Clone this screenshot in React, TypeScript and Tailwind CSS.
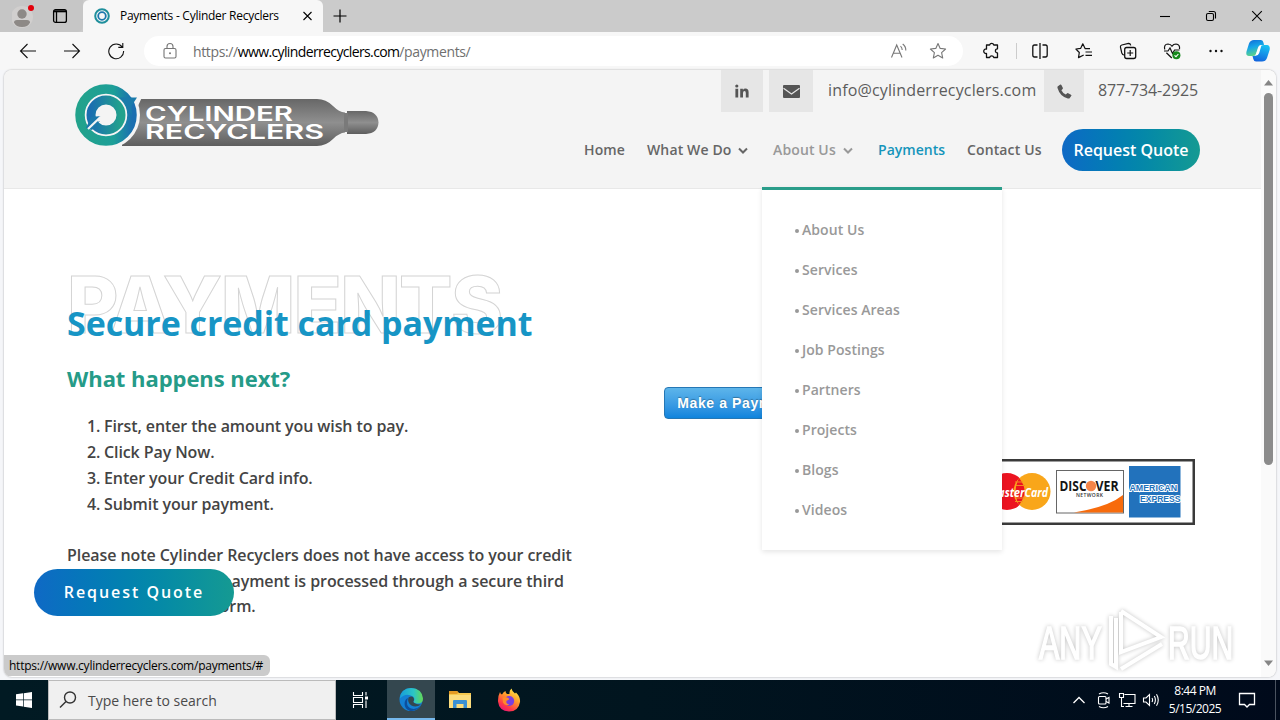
import { ReactNode } from "react";

interface IconProps {
  children: ReactNode;
  size?: number;
  className?: string;
}

function Icon({ children, size = 18, className = "" }: IconProps) {
  return (
    <svg
      width={size}
      height={size}
      viewBox={`0 0 ${size} ${size}`}
      fill="none"
      stroke="currentColor"
      strokeWidth="1.1"
      className={`shrink-0 ${className}`}
    >
      {children}
    </svg>
  );
}

const STAR = "M9 1.5 L11.2 6.4 L16.6 7 L12.6 10.6 L13.7 16 L9 13.3 L4.3 16 L5.4 10.6 L1.4 7 L6.8 6.4 Z";

function Favicon() {
  return (
    <Icon size={16}>
      <circle cx="8" cy="8" r="6.8" stroke="#1f8f9c" strokeWidth="2" />
      <circle cx="8" cy="8" r="3.8" stroke="#1c78ad" strokeWidth="1.8" />
    </Icon>
  );
}

function TitleBar() {
  return (
    <div className="flex h-8 shrink-0 bg-[#cbcbcb]">
      <div className="flex w-[83px] items-center rounded-br-md bg-[#c6c6c6] pl-[12px]">
        <Icon size={24}>
          <circle cx="10" cy="13" r="11" fill="#d1cfce" stroke="none" />
          <circle cx="10" cy="10" r="4.7" fill="#8d8986" stroke="none" />
          <path d="M2 18.5 Q2 16 5 16 H15 Q18 16 18 18.5 Q16 23 10 23 Q4 23 2 18.5Z" fill="#8d8986" stroke="none" />
          <circle cx="19" cy="4" r="3" fill="#e3000b" stroke="none" />
        </Icon>
        <Icon size={16} className="ml-[16px] text-black">
          <rect x="1.6" y="1.6" width="12.8" height="12.8" rx="2" strokeWidth="1.3" />
          <path d="M2 3.3 H14" strokeWidth="2" />
          <path d="M4.5 3 V14" strokeWidth="1.3" />
        </Icon>
      </div>
      <div className="flex w-[240px] items-center rounded-t-md bg-[#f7f7f7] pl-[11px]">
        <Favicon />
        <span className="ml-[10px] w-[180px] whitespace-nowrap text-[12px] tracking-[-0.26px] text-black">
          Payments - Cylinder Recyclers
        </span>
        <Icon size={16} className="text-black">
          <path d="M3.5 4 L11.5 12 M11.5 4 L3.5 12" />
        </Icon>
      </div>
      <div className="flex flex-1 items-center rounded-bl-md pl-[9px]">
        <Icon size={16} className="text-black">
          <path d="M8 1.5 V14.5 M1.5 8 H14.5" strokeWidth="1.2" />
        </Icon>
      </div>
      <div className="flex w-[138px] items-center text-black">
        <div className="flex w-[46px] justify-center">
          <Icon size={12}>
            <path d="M1 6.5 H11" />
          </Icon>
        </div>
        <div className="flex w-[46px] justify-center">
          <Icon size={12}>
            <rect x="1.5" y="3.5" width="7" height="7" rx="1.5" />
            <path d="M3.8 1.5 H8.5 Q10.5 1.5 10.5 3.5 V8.4" />
          </Icon>
        </div>
        <div className="flex w-[46px] justify-center">
          <Icon size={12}>
            <path d="M1.2 1.2 L10.8 10.8 M10.8 1.2 L1.2 10.8" />
          </Icon>
        </div>
      </div>
    </div>
  );
}

function Toolbar() {
  return (
    <div className="flex h-[38px] shrink-0 items-center bg-[#f7f7f7] text-[#111]">
      <div className="flex w-[144px] gap-[26px] pl-[19px]">
        <Icon>
          <path d="M17 9 H1.5 M8.5 2 L1.5 9 L8.5 16" />
        </Icon>
        <Icon>
          <path d="M1 9 H16.5 M9.5 2 L16.5 9 L9.5 16" />
        </Icon>
        <Icon>
          <path d="M15.2 5 A7.4 7.4 0 1 0 16.6 9 M15.8 1 V5.4 H11.3" />
        </Icon>
      </div>
      <div className="flex h-[30px] w-[819px] items-center rounded-full bg-white pl-[17px]">
        <Icon className="text-[#767676]">
          <rect x="3" y="6.5" width="12" height="9.5" rx="1.5" />
          <path d="M6 6.5 V4.5 A3 3 0 0 1 12 4.5 V6.5" />
          <circle cx="9" cy="11.3" r="1" fill="currentColor" stroke="none" />
        </Icon>
        <span className="ml-[14px] w-[697px] whitespace-nowrap text-[14px] tracking-[-0.37px] text-[#6f6f6f]">
          https://<span className="tracking-[-0.63px] text-black">www.cylinderrecyclers.com</span>/payments/
        </span>
        <Icon className="text-[#777]">
          <path d="M1.5 15.5 L6.7 3 L12 15.5 M3.3 11.3 H10.2 M10.5 4.2 Q12.2 5.7 12.2 8 M12.7 2 Q16 4.5 15.8 8.5" />
        </Icon>
        <Icon className="ml-[21px] text-[#777]">
          <path d={STAR} strokeLinejoin="round" />
        </Icon>
      </div>
      <div className="flex w-[53px] items-center justify-center pl-[4px]">
        <Icon>
          <path
            d="M3.5 3 H6.6 A2.2 2.2 0 0 1 10.8 3 H14.5 V6.8 A2 2 0 0 0 14.5 11 V15.5 H10.8 A2.2 2.2 0 0 0 6.6 15.5 H3.5 V11.5 A2.3 2.3 0 1 1 3.5 7 Z"
            strokeWidth="1.3"
            strokeLinejoin="round"
          />
        </Icon>
      </div>
      <div className="h-4 w-px bg-[#ccc]" />
      <div className="flex items-center pl-[1px]">
        <div className="flex w-[44px] justify-center">
          <Icon>
            <path d="M6.5 3 H3.5 Q1.8 3 1.8 5 V13 Q1.8 15 3.5 15 H6.5 M11.5 3 H14.5 Q16.2 3 16.2 5 V13 Q16.2 15 14.5 15 H11.5 M9 1 V17" strokeWidth="1.3" />
          </Icon>
        </div>
        <div className="flex w-[44px] justify-center">
          <Icon>
            <path d="M15 6.7 H10.2 L7.8 1.8 L5.6 6.4 L.9 7 L4.3 10.5 L3.5 15.6 L8.7 13 M10.5 10 H17 M10.5 13.3 H17" strokeWidth="1.2" strokeLinejoin="round" />
          </Icon>
        </div>
        <div className="flex w-[44px] justify-center">
          <Icon>
            <rect x="5.7" y="5.5" width="11" height="11" rx="2" strokeWidth="1.3" />
            <path d="M11.2 8 V14 M8.2 11 H14.2 M5 13 Q3.5 13 2.8 11 L1.4 5 Q1.2 3.4 2.8 3 L9.5 1.4 Q11.2 1.3 11.8 3.4" strokeWidth="1.2" />
          </Icon>
        </div>
        <div className="flex w-[44px] justify-center">
          <Icon>
            <path d="M1.7 7.5 Q.6 2.3 5 2 Q7.8 2 9 4.2 Q10.5 2 13 2 Q17.2 2.4 16.5 7.2 M3.4 10.8 L8.8 16 M1 9 H5 L7 6 L9.5 11.5 L11.6 8 H16.5" strokeWidth="1.2" />
            <circle cx="13.4" cy="13.2" r="4" fill="#16891c" stroke="none" />
            <path d="M11.5 13.3 L13 14.7 L15.4 12" stroke="#fff" />
          </Icon>
        </div>
        <div className="flex w-[44px] justify-center">
          <Icon>
            <g fill="currentColor" stroke="none">
              <circle cx="3.5" cy="9" r="1.2" />
              <circle cx="9" cy="9" r="1.2" />
              <circle cx="14.5" cy="9" r="1.2" />
            </g>
          </Icon>
        </div>
        <Icon size={24} className="ml-[8px]">
          <defs>
            <linearGradient id="cpA" x1="0" y1="0" x2=".3" y2="1">
              <stop stopColor="#1268d6" />
              <stop offset=".5" stopColor="#16a6e8" />
              <stop offset="1" stopColor="#5bd38a" />
            </linearGradient>
            <linearGradient id="cpB" x1=".6" y1="0" x2=".3" y2="1">
              <stop stopColor="#19c0f2" />
              <stop offset="1" stopColor="#1263dd" />
            </linearGradient>
          </defs>
          <path d="M8 1 H15 Q17 1 17.6 4 L18 6 H15 Q12.5 6 11.5 10 L10 15 Q9.5 17 7 17 H3 Q-.5 17 .5 12.5 L3 4.5 Q4.3 1 8 1Z" fill="url(#cpA)" stroke="none" />
          <path d="M18 6 H21 Q24.5 6.5 23.6 11 L21 19 Q19.7 22.5 16 22.5 H10 Q8 22.5 7.3 20 L6.5 17 H8 Q11 17 12 13 L13.5 9 Q14.5 6 18 6Z" fill="url(#cpB)" stroke="none" />
          <path d="M12.4 9 Q13.2 6.4 15.5 6.2 L13.2 14 Q12.5 16.6 9.3 16.8 Z" fill="#fff" stroke="none" />
        </Icon>
      </div>
    </div>
  );
}

function SiteLogo() {
  return (
    <svg width="306" height="66" viewBox="74 82 306 66" className="shrink-0">
      <defs>
        <linearGradient id="tank" x1="0" y1="0" x2="0" y2="1">
          <stop stopColor="#676767" />
          <stop offset=".5" stopColor="#8f8f8f" />
          <stop offset="1" stopColor="#5e5e5e" />
        </linearGradient>
        <linearGradient id="ring" x1="0" y1="0" x2="1" y2="0">
          <stop stopColor="#22a28c" />
          <stop offset=".65" stopColor="#1d9f98" />
          <stop offset="1" stopColor="#1b6fb0" />
        </linearGradient>
        <linearGradient id="core" x1="0" y1="0" x2="1" y2="0">
          <stop stopColor="#1b6fb0" />
          <stop offset="1" stopColor="#22a28c" />
        </linearGradient>
      </defs>
      <path d="M122 99 H317 Q326 99 333 106 Q339 112 345 112.500 V132.500 Q339 133 333 139 Q326 146 317 146 H122 Z" fill="url(#tank)" />
      <path d="M347 111 H366 Q378 112 378.500 122.500 Q378 133 366 134 H347 Z" fill="url(#tank)" />
      <path d="M344 113 H348 V132 H344Z" fill="#7a7a7a" />
      <circle cx="106" cy="115" r="34" fill="#f4f4f4" />
      <path d="M128 95 H143 L137.500 107 L132 113 Z" fill="#f4f4f4" />
      <circle cx="106" cy="115" r="26" fill="none" stroke="url(#ring)" strokeWidth="9.500" />
      <path d="M119 97.500 H137 L131.500 106 L132 116 L126 104Z" fill="#1b7bab" />
      <circle cx="106" cy="115" r="15" fill="none" stroke="url(#core)" strokeWidth="9" />
      <path d="M86 128 L91 117 L101 116 L95 123 L100 121 L92 130 Z" fill="#1b78ab" />
      <path d="M88 129 L101 116.500" stroke="#f4f4f4" strokeWidth="2.200" />
      <g fill="#fff" fontFamily="Inter, sans-serif" fontWeight="600" fontSize="19.500">
        <text x="145" y="121" textLength="148" lengthAdjust="spacingAndGlyphs">CYLINDER</text>
        <text x="145" y="139" textLength="179" lengthAdjust="spacingAndGlyphs">RECYCLERS</text>
      </g>
    </svg>
  );
}

function Chevron() {
  return (
    <svg width="10" height="8" viewBox="0 0 10 8" fill="none" stroke="currentColor" strokeWidth="2" className="mt-[3px] shrink-0">
      <path d="M1 1.500 L5 5.500 L9 1.500" />
    </svg>
  );
}

function SiteHeader() {
  return (
    <header className="flex h-[119px] shrink-0 border-b border-[#e8e8e8] bg-[#f4f4f4] pl-[70px]">
      <div className="pt-[12px]">
        <SiteLogo />
      </div>
      <div className="ml-auto w-[677px]">
        <div className="flex h-[42px] items-start pl-[137px] text-[16px] text-[#5c5c5c]">
          <div className="flex h-[42px] w-[42px] shrink-0 items-center justify-center bg-[#e6e6e6]">
            <svg width="14" height="14" viewBox="0 0 14 14" fill="#555">
              <path d="M.4 4.800 H3.200 V13.600 H.4Z M5.200 4.800 H7.900 V6 Q8.700 4.600 10.500 4.600 Q13.600 4.600 13.600 8.300 V13.600 H10.800 V8.900 Q10.800 7 9.500 7 Q8 7 8 8.900 V13.600 H5.200Z" />
              <circle cx="1.800" cy="2" r="1.600" />
            </svg>
          </div>
          <div className="ml-[6px] flex h-[42px] w-[44px] shrink-0 items-center justify-center bg-[#e6e6e6]">
            <svg width="17" height="13" viewBox="0 0 17 13">
              <rect width="17" height="13" rx="1" fill="#555" />
              <path d="M.5 3.200 L8.500 9 L16.500 3.200" fill="none" stroke="#e6e6e6" strokeWidth="1.200" />
            </svg>
          </div>
          <span className="ml-[15px] w-[216px] shrink-0 whitespace-nowrap pt-[8px] tracking-[0.15px]">
            info@cylinderrecyclers.com
          </span>
          <div className="flex h-[42px] w-[40px] shrink-0 items-center justify-center bg-[#e6e6e6]">
            <svg width="15" height="15" viewBox="0 0 15 15" fill="#555">
              <path d="M.6 2.500 L3.300 .5 Q4 .3 4.400 1 L5.900 4 Q6 4.600 5.600 5 L4.400 6.200 Q5.800 9.200 8.800 10.600 L10.200 9.300 Q10.700 8.900 11.200 9.200 L14 10.700 Q14.700 11.200 14.400 11.800 L12.600 14.300 Q12 14.800 10.800 14.500 Q3 12.500 .5 4 Q.3 3 .6 2.500Z" />
            </svg>
          </div>
          <span className="ml-[14px] whitespace-nowrap pt-[8px] tracking-[-0.15px]">877-734-2925</span>
        </div>
        <nav className="mt-[17px] flex h-[42px] items-center whitespace-nowrap text-[14px] font-semibold tracking-[0.13px] text-[#666]">
          <span className="w-[63px] pb-[2px]">Home</span>
          <span className="flex w-[126px] items-center pb-[2px]">
            <span className="w-[91px]">What We Do</span>
            <Chevron />
          </span>
          <span className="flex w-[105px] items-center pb-[2px] text-[#999]">
            <span className="w-[70px]">About Us</span>
            <Chevron />
          </span>
          <span className="w-[89px] pb-[2px] tracking-[0.02px] text-[#1595bb]">Payments</span>
          <span className="w-[95px] pb-[2px]">Contact Us</span>
          <span className="flex h-[42px] w-[138px] items-center justify-center rounded-full bg-linear-to-r from-[#0f69c5] to-[#159a92] text-[16px] tracking-normal text-white">
            Request Quote
          </span>
        </nav>
      </div>
    </header>
  );
}

const MENU = ["About Us", "Services", "Services Areas", "Job Postings", "Partners", "Projects", "Blogs", "Videos"];

function AboutMenu() {
  return (
    <div className="absolute left-[758px] top-[117px] z-10 h-[363px] w-[240px] border-t-3 border-[#2a9d8a] bg-white pt-[19px] shadow-[0_2px_5px_rgba(0,0,0,0.1)]">
      {MENU.map((item) => (
        <div key={item} className="flex h-[40px] items-center pl-[33px] text-[14px] font-semibold tracking-[0.06px] text-[#999]">
          <span className="mr-[3px] mt-[3px] h-[4px] w-[4px] rounded-full bg-[#999]" />
          {item}
        </div>
      ))}
    </div>
  );
}

function CardLogos() {
  return (
    <svg width="280" height="66" viewBox="915 459 280 66">
      <rect x="916.250" y="460.250" width="277.500" height="63.500" fill="#fff" stroke="#3a3a3a" strokeWidth="2.500" />
      <circle cx="1007" cy="491.500" r="18.500" fill="#ec1320" />
      <circle cx="1032" cy="491.500" r="18.500" fill="#f9a61a" />
      <path d="M1019 478 Q1030 491 1019 505 Q1012 492 1019 478Z" fill="#ec1320" />
      <path d="M1015 482 H1023 M1016 485.500 H1025 M1016 498 H1025 M1015 501.500 H1023" stroke="#f58a20" strokeWidth="1.200" />
      <text x="989" y="496.500" fontFamily="Open Sans, sans-serif" fontSize="12" fontWeight="700" fontStyle="italic" fill="#fff" textLength="59" lengthAdjust="spacingAndGlyphs">
        MasterCard
      </text>
      <rect x="1056.500" y="470.500" width="67" height="42.500" fill="#fff" stroke="#666" />
      <path d="M1074 512.500 Q1108 507 1123 495 V512.500Z" fill="#f76b0c" />
      <g fontFamily="Open Sans, sans-serif" fontWeight="700" fill="#151515" fontSize="13.500">
        <text x="1059.500" y="491" textLength="27" lengthAdjust="spacingAndGlyphs">DISC</text>
        <text x="1095.500" y="491" textLength="23" lengthAdjust="spacingAndGlyphs">VER</text>
      </g>
      <circle cx="1091" cy="486" r="5.200" fill="#f58549" />
      <text x="1076" y="497" fontFamily="Open Sans, sans-serif" fontWeight="600" fontSize="5" fill="#333" textLength="27">NETWORK</text>
      <rect x="1129" y="466" width="51.500" height="51.500" fill="#2272bc" />
      <g fontFamily="Liberation Sans, sans-serif" fontWeight="700" fontSize="9.500" fill="#2272bc" stroke="#fff" strokeWidth="2" paintOrder="stroke">
        <text x="1129.500" y="491" textLength="47.500" lengthAdjust="spacingAndGlyphs">AMERICAN</text>
        <text x="1140" y="501.500" textLength="40.500" lengthAdjust="spacingAndGlyphs">EXPRESS</text>
      </g>
    </svg>
  );
}

function PageBody() {
  return (
    <main className="flex flex-1 pl-[63px] font-semibold text-[#444]">
      <div className="w-[597px] shrink-0 pt-[75px]">
        <div className="h-[44px] whitespace-nowrap font-['Inter'] text-[79px] font-extrabold leading-[80px] tracking-[-1.6px] text-white [-webkit-text-stroke:1px_#d4d4d4]">
          PAYMENTS
        </div>
        <h1 className="relative h-[46px] whitespace-nowrap text-[34px] font-bold leading-[30px] tracking-[-0.07px] text-[#1795c5]">
          Secure credit card payment
        </h1>
        <h2 className="h-[59px] pt-[9px] text-[22px] font-bold leading-[30px] tracking-[-0.05px] text-[#259b88]">
          What happens next?
        </h2>
        <ol className="text-[16px] leading-[26px] tracking-[-0.1px]">
          {[
            "First, enter the amount you wish to pay.",
            "Click Pay Now.",
            "Enter your Credit Card info.",
            "Submit your payment.",
          ].map((step, i) => (
            <li key={step} className="flex whitespace-nowrap pl-[20px]">
              <span className="w-[17px]">{i + 1}.</span>
              {step}
            </li>
          ))}
        </ol>
        <p className="mt-[26px] whitespace-nowrap text-[16px] leading-[25.6px] tracking-[-0.07px]">
          Please note Cylinder Recyclers does not have access to your credit
          <br />
          card information as payment is processed through a secure third
          <br />
          party payment platform.
        </p>
      </div>
      <div className="w-[531px] pt-[198px]">
        <div className="flex h-[32px] w-[144px] items-center justify-center whitespace-nowrap rounded-[4px] border border-[#2577b5] bg-linear-to-b from-[#5db5ea] to-[#0d84dd] font-['Liberation_Sans'] text-[14px] font-bold tracking-[0.6px] text-white [text-shadow:0_-1px_1px_rgba(0,0,0,0.3)]">
          Make a Payment
        </div>
        <div className="mt-[40px] flex justify-end">
          <CardLogos />
        </div>
      </div>
    </main>
  );
}

function Scrollbar() {
  return (
    <div className="flex w-[15px] shrink-0 flex-col items-center bg-[#fafafa]">
      <svg width="9" height="6" viewBox="0 0 9 6" className="mt-[10px]" fill="#858585">
        <path d="M4.500 0 L9 5.500 H0Z" />
      </svg>
      <div className="mt-[7px] h-[372px] w-[9px] rounded-full bg-[#8b8b8b]" />
      <svg width="9" height="6" viewBox="0 0 9 6" className="mb-[11px] mt-auto" fill="#858585">
        <path d="M0 .5 H9 L4.500 6Z" />
      </svg>
    </div>
  );
}

function Watermark() {
  return (
    <svg width="204" height="70" viewBox="1034 606 204 70" className="absolute bottom-[1px] right-[38px] overflow-visible drop-shadow-[0_0_2px_rgba(0,0,0,0.24)]">
      <g fontFamily="Liberation Sans, sans-serif" fontSize="47" fill="#fff" stroke="#fff" strokeWidth="1.600">
        <text transform="translate(1039 658.500) scale(.65 1)">ANY</text>
        <text transform="translate(1168 658.500) scale(.64 1)">RUN</text>
      </g>
      <g fill="none" stroke="#fff" strokeWidth="4">
        <path d="M1111 616 V664 L1116 667 V618" />
        <path d="M1121 612 V652 L1161 637 L1121 611" />
        <path d="M1121 669 L1162 644" />
      </g>
    </svg>
  );
}

function Taskbar() {
  return (
    <div className="flex h-[40px] shrink-0 bg-linear-to-r from-[#011a23] via-[#01151f] to-[#000a1b] text-white">
      <div className="flex w-[48px] items-center justify-center">
        <svg width="16" height="16" viewBox="0 0 16 16" fill="#fff">
          <path d="M0 2.300 L7 1.300 V7.600 H0Z M7.700 1.200 L16 0 V7.600 H7.700Z M0 8.300 H7 V14.600 L0 13.600Z M7.700 8.300 H16 V16 L7.700 14.800Z" />
        </svg>
      </div>
      <div className="flex w-[288px] items-center border border-[#bbb] bg-[#f0f0f0] pl-[10px] text-[#333]">
        <Icon>
          <circle cx="11" cy="6.500" r="5.500" strokeWidth="1.400" />
          <path d="M7 10.500 L1 16.500" strokeWidth="1.400" />
        </Icon>
        <span className="ml-[11px] text-[14px] text-[#4a4a4a]">Type here to search</span>
      </div>
      <div className="flex w-[51px] items-center justify-center pr-[3px]">
        <Icon>
          <path d="M2.500 1 V4.500 H11.500 V1 M2.500 17 V13.500 H11.500 V17 M2.500 6.500 H11.500 V11.500 H2.500Z M15 1 V4.500 M15 9.500 V17" />
          <path d="M14 5.500 H17 V8.500 H14Z" fill="#fff" stroke="none" />
        </Icon>
      </div>
      <div className="flex w-[48px] items-center justify-center border-b-2 border-[#76b9ed] bg-[#34474f]">
        <Icon size={24}>
          <defs>
            <linearGradient id="edgeTop" x1="0" y1=".5" x2="1" y2=".5">
              <stop stopColor="#169ddb" />
              <stop offset=".6" stopColor="#2cc5c5" />
              <stop offset="1" stopColor="#64d854" />
            </linearGradient>
          </defs>
          <circle cx="12" cy="12.500" r="11.500" fill="#1480d4" stroke="none" />
          <path d="M.7 11.500 Q2 1 12 1 Q23 1.500 24 11.500 Q24 16.500 19 16.500 Q15 16.500 14.500 14.500 Q16.500 12 14 9.500 Q7 5 .7 11.500Z" fill="url(#edgeTop)" stroke="none" />
          <path d="M9 11 Q6 19 12 21.500 Q17 23.300 22 18.500 Q17 24.500 11 24 Q4 21 6 14 Q7 11.500 9 11Z" fill="#0c4f9e" stroke="none" />
          <path d="M9.500 10.500 Q13 8.500 14.700 11 Q15.600 13 14.300 14.500 Q14.500 17 22 17.500 Q17 21 12.500 18.500 Q8 15.500 9.500 10.500Z" fill="#34474f" stroke="none" />
        </Icon>
      </div>
      <div className="flex w-[49px] items-center justify-center">
        <Icon size={22}>
          <path d="M0 2 H8 L10 4 H22 V19 H0Z" fill="#f5c84f" stroke="none" />
          <path d="M0 2 H8 L9.500 3.500 L8 5 H0Z" fill="#e39a23" stroke="none" />
          <path d="M0 6 H22 V19 H0Z" fill="#fbdc7d" stroke="none" />
          <path d="M4 19 V12 Q4 11 5 11 H17 Q18 11 18 12 V19 H14.500 V15 H7.500 V19Z" fill="#3a90d4" stroke="none" />
        </Icon>
      </div>
      <div className="flex w-[49px] items-center justify-center">
        <Icon size={24}>
          <defs>
            <linearGradient id="fox" x1=".8" y1="0" x2=".2" y2="1">
              <stop stopColor="#fff04a" />
              <stop offset=".4" stopColor="#ff9a2b" />
              <stop offset=".75" stopColor="#ff3a47" />
              <stop offset="1" stopColor="#e6127d" />
            </linearGradient>
          </defs>
          <path d="M3 4 Q3.500 6 5 6.500 Q6.500 3.500 8.500 3 Q8.500 5 10 6 H12.500 Q12 2.500 14.500 .5 Q15 3.500 18 5.500 L19 4.500 Q23.500 9 23 14 Q21.500 23.500 12 23.500 Q2 23 1 13.500 Q.8 8 3 4Z" fill="url(#fox)" stroke="none" />
          <circle cx="12.200" cy="13" r="5" fill="#7a3fe0" stroke="none" />
          <path d="M5.500 9.500 Q9 8 12 10.500 Q12.500 12 9.500 12.800 Q8.500 16 12.500 16.500 Q8 18.500 6 14.500Z" fill="#ff8a2a" stroke="none" />
        </Icon>
      </div>
      <div className="ml-auto flex items-center">
        <Icon className="mr-[7px]">
          <path d="M3.500 12 L9 6.500 L14.500 12" strokeWidth="1.300" />
        </Icon>
        <Icon className="mr-[5px]">
          <rect x="3.500" y="5.500" width="7.500" height="7.500" rx="1" />
          <path d="M11 8 L14 6.500 V12 L11 10.500 M4 3 Q8.500 .5 13 3 M4 15.500 Q8.500 18 13 15.500" />
        </Icon>
        <Icon className="mr-[6px]">
          <path d="M6.500 3.500 H17 V12.500 H5.500 M11 12.500 V15.500 M7.500 15.500 H14.500 M1.500 2.500 H5.500 V6.500 H1.500Z M3.500 6.500 V15.500 H6" />
        </Icon>
        <Icon className="mr-[7px]">
          <path d="M1.500 7 H4 L7.500 3.500 V14.500 L4 11 H1.500Z M10 7 Q11.200 9 10 11 M12.300 5 Q14.500 9 12.300 13 M14.500 3.300 Q18 9 14.500 14.700" />
        </Icon>
        <div className="w-[56px] text-center text-[12px] leading-[18px] tracking-[-0.5px]">
          <div>8:44 PM</div>
          <div>5/15/2025</div>
        </div>
        <Icon className="ml-[15px]">
          <path d="M1.500 2.500 H16.500 V13.500 H11.500 L9 16 L6.500 13.500 H1.500Z" strokeWidth="1.300" />
        </Icon>
        <div className="ml-[19px] h-[40px] w-px bg-[#4a5360]" />
        <div className="w-[4px]" />
      </div>
    </div>
  );
}

export default function App() {
  return (
    <div className="flex h-[720px] w-[1280px] flex-col overflow-hidden bg-[#f5f6f9] font-['Open_Sans',sans-serif]">
      <TitleBar />
      <Toolbar />
      <div className="relative mx-[4px] mb-[3px] flex h-[607px] overflow-hidden rounded-lg bg-white shadow-[0_0_2px_rgba(0,0,0,0.35)]">
        <div className="flex w-[1257px] flex-col">
          <SiteHeader />
          <PageBody />
        </div>
        <Scrollbar />
        <AboutMenu />
        <Watermark />
        <div className="absolute left-[30px] top-[499px] flex h-[47px] w-[200px] items-center justify-center rounded-full bg-linear-to-r from-[#0f69c5] to-[#159a92] pb-px text-[16px] font-semibold tracking-[1.95px] text-white">
          Request Quote
        </div>
        <div className="absolute bottom-px left-0 flex h-[21px] w-[266px] items-center whitespace-nowrap rounded-r-md bg-[#cbcbcb] pl-[5px] text-[12px] tracking-[-0.24px] text-black">
          https://www.cylinderrecyclers.com/payments/#
        </div>
      </div>
      <Taskbar />
    </div>
  );
}
